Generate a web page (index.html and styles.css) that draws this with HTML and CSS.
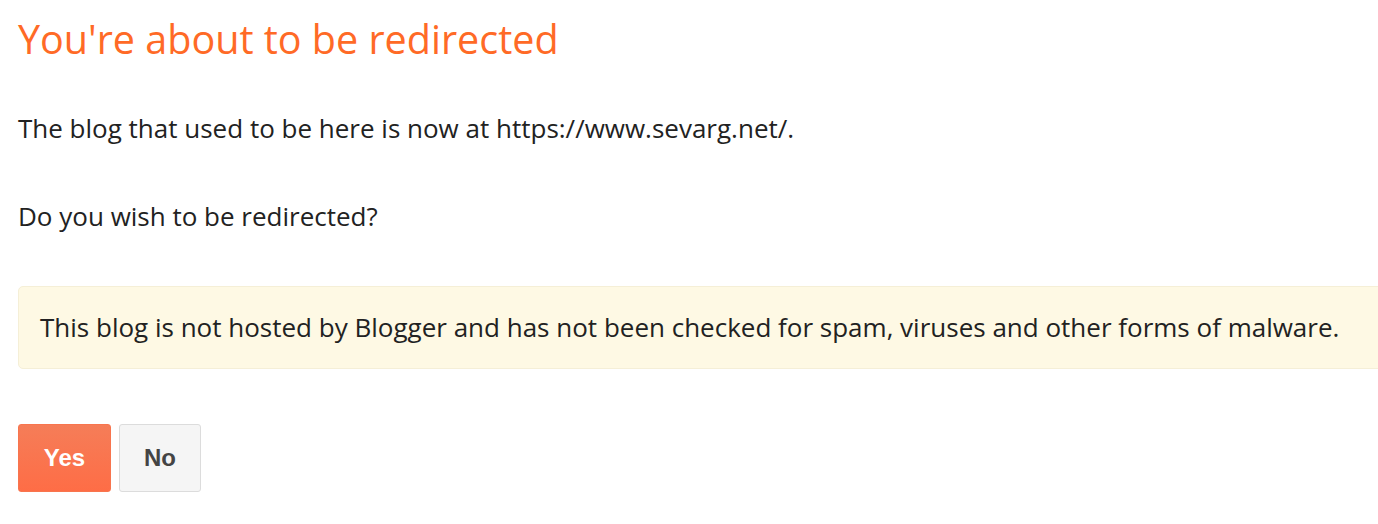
FILE: index.html
```html
<!DOCTYPE html>
<html>
<head>
<meta charset="utf-8">
<link rel="stylesheet" href="styles.css">
</head>
<body>
<div class="page">
  <h1 class="title">You're about to be redirected</h1>
  <p class="text">The blog that used to be here is now at https://www.sevarg.net/.</p>
  <p class="text text-second">Do you wish to be redirected?</p>
  <div class="notice">This blog is not hosted by Blogger and has not been checked for spam, viruses and other forms of malware.</div>
  <div class="actions">
    <button class="btn btn-yes">Yes</button>
    <button class="btn btn-no">No</button>
  </div>
</div>
</body>
</html>
```

FILE: styles.css
```css
html { overflow: hidden; }
body {
  margin: 0;
  background: #fff;
  font-family: "Open Sans", "DejaVu Sans", sans-serif;
  color: #222;
}
.page {
  padding: 0 0 0 18px;
  width: 1400px;
}
.title {
  margin: 14px 0 0 0;
  font-weight: 400;
  font-size: 39.5px;
  line-height: 50px;
  color: #ff6a26;
}
.text {
  margin: 47px 0 0 0;
  font-size: 26px;
  line-height: 34px;
}
.text-second {
  margin-top: 54px;
}
.notice {
  margin-top: 53px;
  background: #fef9e4;
  border: 1px solid #f5efd7;
  border-radius: 5px;
  padding: 23px 21px 24px;
  font-size: 26px;
  line-height: 34px;
}
.actions {
  display: flex;
  gap: 8px;
  margin-top: 55px;
}
.btn {
  font-family: "Liberation Sans", Arial, sans-serif;
  font-weight: 700;
  font-size: 24px;
  height: 68px;
  border-radius: 3px;
  cursor: pointer;
}
.btn-yes {
  width: 93px;
  color: #fff;
  background: linear-gradient(#f57d58, #fe6d46);
  border: 1px solid #f8754e;
}
.btn-no {
  width: 82px;
  color: #444;
  background: #f5f5f5;
  border: 1px solid #dcdcdc;
}
```
